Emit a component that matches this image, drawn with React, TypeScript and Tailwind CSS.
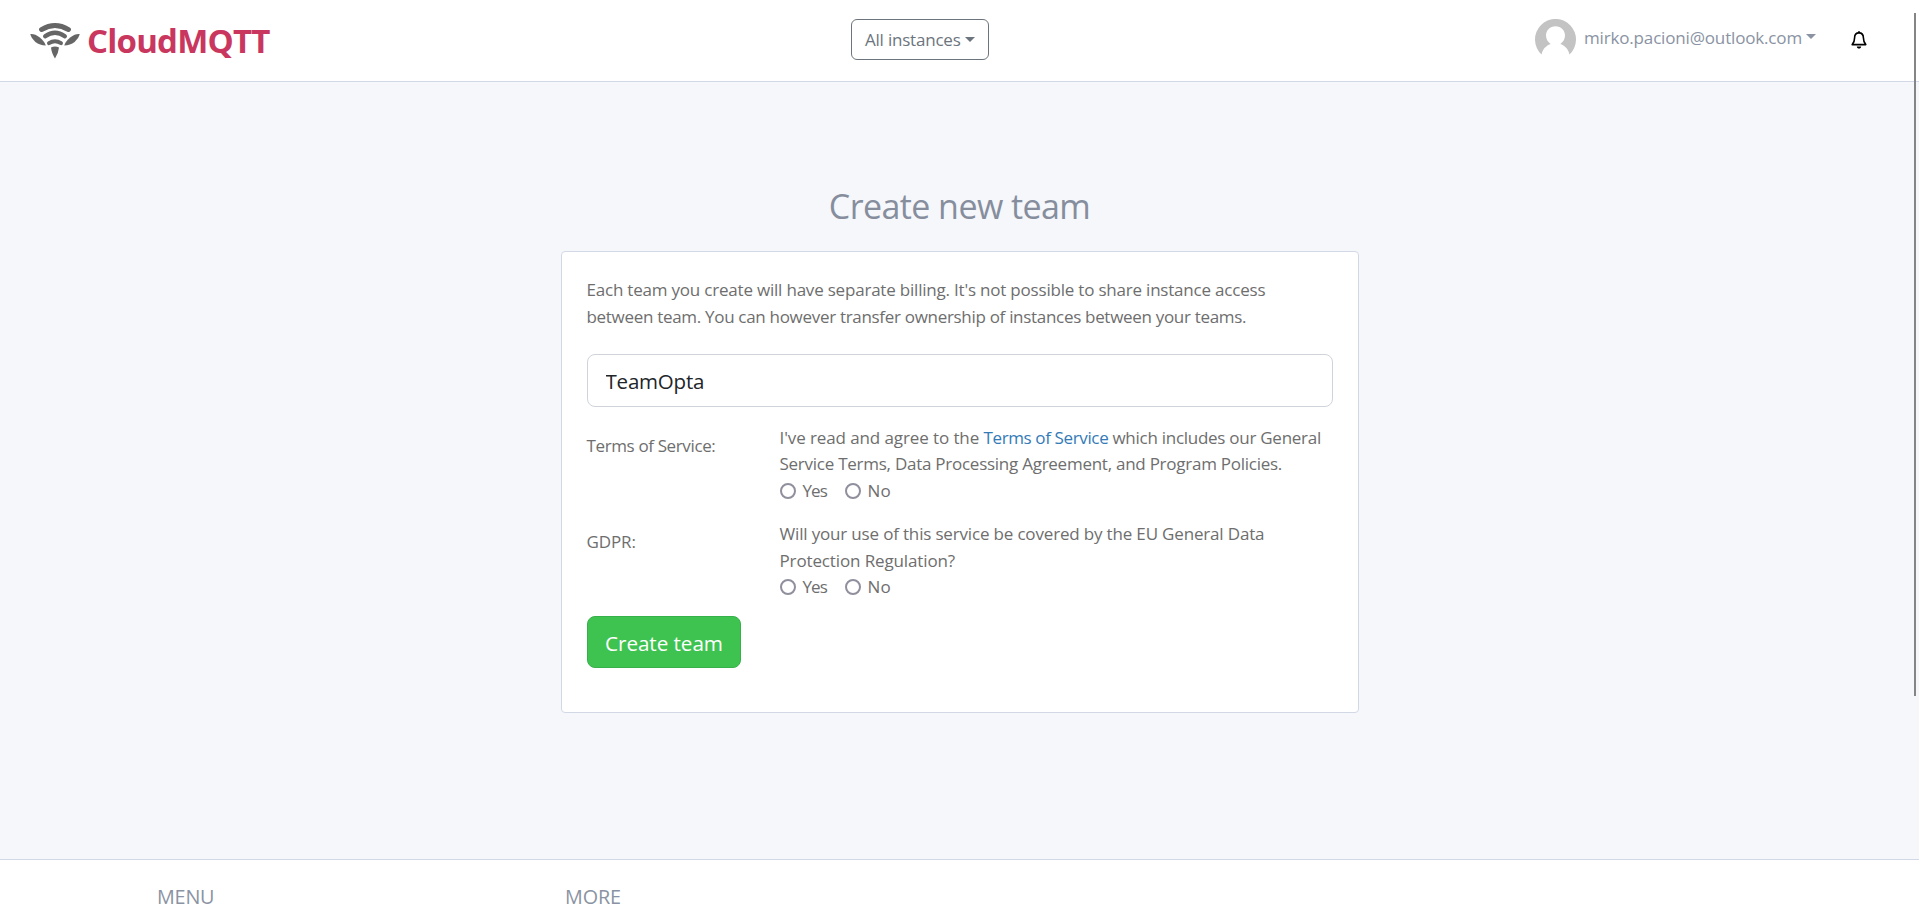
import { useState } from "react";

function LogoMark() {
  return (
    <svg width="50" height="37" viewBox="0 0 50 37" fill="none" aria-hidden="true">
      <g stroke="#666666" strokeLinecap="round">
        <path d="M11.5 7.6 Q25 -0.6 38.5 7.6" strokeWidth="4.8" />
        <path d="M15.2 14.3 Q25 7.4 34.8 14.3" strokeWidth="4.4" />
        <path d="M19 21.1 Q25 17.4 31 21.1" strokeWidth="4" />
      </g>
      <g fill="#666666">
        <path d="M0.2 12.2 Q4.5 11.6 9.8 15.6 Q14.6 19.4 15.8 23.6 Q9.8 23.4 5.4 20 Q1.4 16.6 0.2 12.2Z" />
        <path d="M49.8 12.2 Q45.5 11.6 40.2 15.6 Q35.4 19.4 34.2 23.6 Q40.2 23.4 44.6 20 Q48.6 16.6 49.8 12.2Z" />
        <path d="M21 25.5 Q25 23.4 29 25.5 Q28.6 30.5 25 36.6 Q21.4 30.5 21 25.5Z" />
      </g>
    </svg>
  );
}

function Avatar() {
  return (
    <svg width="41" height="41" viewBox="0 0 41 41" className="shrink-0" aria-hidden="true">
      <path
        d="M6.6 35.5 A20.5 20.5 0 1 1 34.4 35.5 C33.4 30.2 30.6 27.2 25.4 25 C28 23.2 30 20.2 30 16.6 C30 11.2 26 7.2 20.5 7.2 C15 7.2 11 11.2 11 16.6 C11 20.2 13 23.2 15.6 25 C10.4 27.2 7.6 30.2 6.6 35.5Z"
        fill="#c3c3c3"
      />
    </svg>
  );
}

function Bell() {
  return (
    <svg width="16" height="18" viewBox="0 0 16 18" aria-hidden="true">
      <path
        d="M8 1.9 C5 1.9 3.6 4.2 3.6 6.8 C3.6 10.4 2.8 11.9 1.2 13.6 L14.8 13.6 C13.2 11.9 12.4 10.4 12.4 6.8 C12.4 4.2 11 1.9 8 1.9Z"
        fill="none"
        stroke="#000000"
        strokeWidth="1.6"
        strokeLinejoin="round"
      />
      <path d="M7.1 0.3 H8.9 V2 H7.1Z M5.8 15.5 H10.2 C10 16.9 9.2 17.6 8 17.6 C6.8 17.6 6 16.9 5.8 15.5Z" fill="#000000" />
    </svg>
  );
}

function Caret({ className }: { className: string }) {
  return (
    <svg width="10" height="5" viewBox="0 0 10 5" className={className} aria-hidden="true">
      <path d="M0 0 H10 L5 5Z" fill="currentColor" />
    </svg>
  );
}

function YesNo({ name }: { name: string }) {
  const [value, setValue] = useState("");
  return (
    <div className="flex h-[26.4px] items-center">
      {["Yes", "No"].map((option) => (
        <label key={option} className="flex w-[65px] items-center gap-[7px]">
          <input
            type="radio"
            name={name}
            checked={value === option}
            onChange={() => setValue(option)}
            className="size-4 shrink-0 appearance-none rounded-full border-2 border-[#8f8f9d] bg-white checked:border-[5px] checked:border-[#0060df]"
          />
          <span className={option === "Yes" ? "tracking-[-0.9px]" : "tracking-[0.3px]"}>{option}</span>
        </label>
      ))}
    </div>
  );
}

export default function App() {
  const [team, setTeam] = useState("TeamOpta");
  return (
    <div className="relative flex h-[911px] flex-col overflow-hidden bg-[#f5f7fb] font-['Open_Sans','Noto_Sans',sans-serif] text-[17px] leading-[26.4px] text-[#6e6e6e]">
      <header className="flex h-[82px] shrink-0 items-start border-b border-[#d2d8e5] bg-white">
        <div className="flex w-[851px] pt-[22px] pl-[30px]">
          <LogoMark />
          <span className="mt-[-1px] ml-[7px] text-[33px] leading-[40px] font-bold tracking-[-0.78px] text-[#c9365e]">
            CloudMQTT
          </span>
        </div>
        <button className="mt-[19px] flex h-[41px] w-[138px] items-center rounded-[6px] border border-[#6c757d] pl-[13px] tracking-[-0.21px] text-[#6c757d]">
          <span className="pt-[2px]">All instances</span>
          <Caret className="mt-[-1px] ml-[4px]" />
        </button>
        <div className="ml-auto flex pt-[19px] text-[#8a93a3]">
          <Avatar />
          <span className="mt-[6px] ml-[8px] tracking-[-0.16px]">mirko.pacioni@outlook.com</span>
          <Caret className="mt-[15px] ml-[4px]" />
          <span className="mt-[12px] mr-[52px] ml-[35px]">
            <Bell />
          </span>
        </div>
      </header>

      <main className="flex grow flex-col items-center">
        <h1 className="mt-[100px] mb-[20px] h-[49px] text-[34px] leading-[49px] tracking-[-0.58px] text-[#868e9e]">
          Create new team
        </h1>
        <form
          onSubmit={(e) => e.preventDefault()}
          className="h-[462px] w-[798px] rounded-[4px] border border-[#d2d8e5] bg-white px-[25px] pt-[25px]"
        >
          <p className="whitespace-nowrap">
            <span className="block h-[27px] tracking-[-0.205px]">
              Each team you create will have separate billing. It's not possible to share instance access
            </span>
            <span className="block h-[27px] tracking-[-0.305px]">
              between team. You can however transfer ownership of instances between your teams.
            </span>
          </p>
          <input
            value={team}
            onChange={(e) => setTeam(e.target.value)}
            className="mt-[23px] block h-[53px] w-full rounded-[8px] border border-[#ced4da] px-[18px] pt-px text-[20.5px] tracking-[-0.2px] text-[#212529] outline-none"
          />
          <div className="mt-[18px] flex whitespace-nowrap">
            <div className="w-[193px] pt-[8px] tracking-[-0.37px]">Terms of Service:</div>
            <div>
              <div className="tracking-[-0.1px]">
                I've read and agree to the{" "}
                <a href="#" className="tracking-[-0.37px] text-[#337ab7]">
                  Terms of Service
                </a>
                <span className="tracking-[-0.27px]"> which includes our General</span>
              </div>
              <div className="tracking-[-0.255px]">Service Terms, Data Processing Agreement, and Program Policies.</div>
              <YesNo name="tos" />
            </div>
          </div>
          <div className="mt-[17px] flex whitespace-nowrap">
            <div className="w-[193px] pt-[8px] tracking-[-0.1px]">GDPR:</div>
            <div>
              <div className="h-[27px] tracking-[-0.17px]">
                Will your use of this service be covered by the EU General Data
              </div>
              <div className="h-[26px] tracking-[-0.13px]">Protection Regulation?</div>
              <YesNo name="gdpr" />
            </div>
          </div>
          <button className="mt-[15px] h-[52px] w-[154px] rounded-[8px] border border-[#36b14a] bg-[#3ec350] pt-[4px] pl-px text-[20.7px] tracking-[-0.06px] text-white">
            Create team
          </button>
        </form>
      </main>

      <footer className="flex h-[52px] shrink-0 border-t border-[#d2d8e5] bg-white pt-[24px] pl-[157px] text-[19.8px] text-[#8a93a3]">
        <div className="w-[408px] tracking-[-0.2px]">MENU</div>
        <div className="tracking-[-0.1px]">MORE</div>
      </footer>

      <div className="absolute top-[13px] right-[3px] h-[683px] w-[2px] bg-[#858585]" />
    </div>
  );
}
